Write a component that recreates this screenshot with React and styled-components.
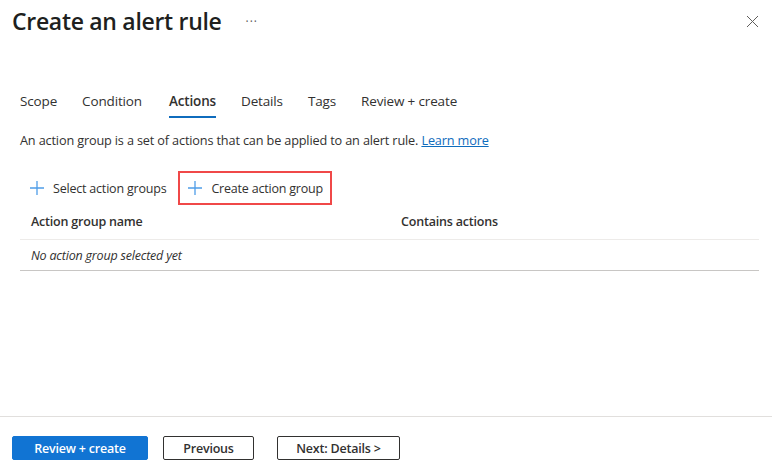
import styled, { createGlobalStyle } from "styled-components";

const GlobalStyle = createGlobalStyle`
  html, body {
    margin: 0;
    padding: 0;
    background: #fff;
  }
  body {
    font-family: "Open Sans", "Noto Sans", sans-serif;
    color: #323130;
  }
`;

const Page = styled.div`
  width: 772px;
  height: 472px;
  display: flex;
  flex-direction: column;
  overflow: hidden;
`;

const Header = styled.div`
  display: flex;
  align-items: center;
  height: 42px;
  padding: 0 8px 0 12px;
`;

const Title = styled.h1`
  margin: 0;
  font-size: 23px;
  font-weight: 600;
  letter-spacing: -0.3px;
  color: #201f1e;
`;

const More = styled.span`
  margin-left: 24px;
  font-size: 12px;
  color: #605e5c;
  letter-spacing: 1px;
`;

const Close = styled.button`
  margin-left: auto;
  width: 24px;
  height: 24px;
  border: none;
  background: none;
  padding: 0;
  display: flex;
  align-items: center;
  justify-content: center;
`;

const Body = styled.div`
  flex: 1;
  padding: 45px 13px 0 20px;
`;

const Tabs = styled.div`
  display: flex;
  gap: 25px;
  height: 31px;
`;

const Tab = styled.div`
  position: relative;
  font-size: 13.5px;
  font-weight: ${(p) => (p.$active ? 600 : 400)};
  color: #323130;
  padding-top: 5px;
  margin-left: ${(p) => (p.$active ? "2px" : 0)};
  letter-spacing: -0.15px;

  &::after {
    content: "";
    display: ${(p) => (p.$active ? "block" : "none")};
    position: absolute;
    left: 0;
    right: 0;
    bottom: 0;
    height: 2px;
    background: #0f6cbd;
  }
`;

const Description = styled.p`
  margin: 13px 0 0;
  font-size: 12.7px;
  letter-spacing: -0.15px;
  color: #323130;
`;

const Link = styled.a`
  color: #0f6cbd;
  text-decoration: underline;
`;

const Toolbar = styled.div`
  display: flex;
  align-items: center;
  margin-top: 22px;
  height: 34px;
`;

const ToolButton = styled.div`
  display: flex;
  align-items: center;
  gap: 8px;
  height: 34px;
  box-sizing: border-box;
  padding: 0 7px;
  margin-right: ${(p) => (p.$highlight ? 0 : "3px")};
  border: 2px solid ${(p) => (p.$highlight ? "#f04848" : "transparent")};
  font-size: 12.5px;
  letter-spacing: -0.2px;
  color: #323130;
`;

const Table = styled.div`
  margin-top: -1px;
`;

const HeadRow = styled.div`
  display: grid;
  grid-template-columns: 370px 1fr;
  padding: 0 11px;
  height: 35px;
  align-items: center;
  border-bottom: 1px solid #edebe9;
  font-size: 12.5px;
  font-weight: 600;
  letter-spacing: -0.2px;
  color: #323130;
`;

const EmptyRow = styled.div`
  padding: 0 11px;
  height: 30px;
  display: flex;
  align-items: center;
  border-bottom: 1px solid #c8c6c4;
  font-size: 12.5px;
  font-style: italic;
  letter-spacing: -0.2px;
  color: #323130;
`;

const Footer = styled.div`
  border-top: 1px solid #e1dfdd;
  height: 56px;
  box-sizing: border-box;
  display: flex;
  align-items: flex-start;
  padding: 19px 12px 0;
  gap: 15px;
`;

const Button = styled.button`
  height: 24px;
  box-sizing: border-box;
  padding: 0;
  width: ${(p) => p.$w}px;
  white-space: nowrap;
  border-radius: 2px;
  border: 1px solid ${(p) => (p.$primary ? "#1174d3" : "#323130")};
  background: ${(p) => (p.$primary ? "#1174d3" : "#fff")};
  color: ${(p) => (p.$primary ? "#fff" : "#323130")};
  font-family: "Open Sans", sans-serif;
  font-size: 12.5px;
  font-weight: 600;
  letter-spacing: -0.2px;
  margin-right: ${(p) => p.$mr || 0}px;
`;

const Plus = () => (
  <svg width="16" height="16" viewBox="0 0 16 16">
    <path d="M8 1v14M1 8h14" stroke="#4f9de8" strokeWidth="1.3" />
  </svg>
);

const CloseIcon = () => (
  <svg width="13" height="13" viewBox="0 0 13 13">
    <path d="M1 1l11 11M12 1L1 12" stroke="#605e5c" strokeWidth="1" />
  </svg>
);

export default function App() {
  return (
    <Page>
      <GlobalStyle />
      <Header>
        <Title>Create an alert rule</Title>
        <More>···</More>
        <Close>
          <CloseIcon />
        </Close>
      </Header>
      <Body>
        <Tabs>
          <Tab>Scope</Tab>
          <Tab>Condition</Tab>
          <Tab $active>Actions</Tab>
          <Tab>Details</Tab>
          <Tab>Tags</Tab>
          <Tab>Review + create</Tab>
        </Tabs>
        <Description>
          An action group is a set of actions that can be applied to an alert rule.{" "}
          <Link href="#">Learn more</Link>
        </Description>
        <Toolbar>
          <ToolButton>
            <Plus />
            Select action groups
          </ToolButton>
          <ToolButton $highlight>
            <Plus />
            Create action group
          </ToolButton>
        </Toolbar>
        <Table>
          <HeadRow>
            <span>Action group name</span>
            <span>Contains actions</span>
          </HeadRow>
          <EmptyRow>No action group selected yet</EmptyRow>
        </Table>
      </Body>
      <Footer>
        <Button $primary $w={136}>Review + create</Button>
        <Button $w={91} $mr={8}>Previous</Button>
        <Button $w={123}>Next: Details &gt;</Button>
      </Footer>
    </Page>
  );
}
